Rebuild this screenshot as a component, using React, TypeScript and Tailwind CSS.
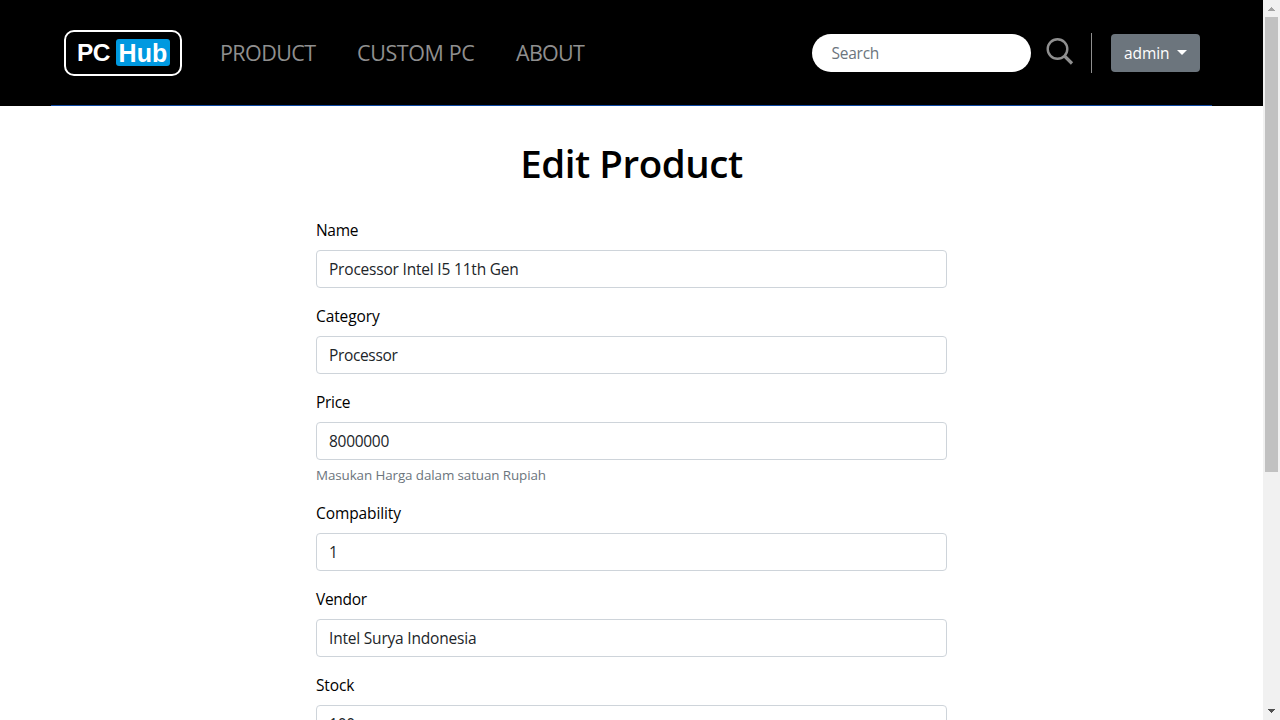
import React from "react";

type FieldProps = { label: string; labelClass: string; value: string; valueClass: string; hint?: string };

function Field({ label, labelClass, value, valueClass, hint }: FieldProps) {
  return (
    <div className="mb-4 flex flex-col">
      <label className="mb-2 h-6 leading-[25px] text-black">
        <span className={labelClass}>{label}</span>
      </label>
      <div className="h-[38px] rounded border border-[#ced4da] bg-white px-3 pt-[6px] leading-[25px] text-[#212529]">
        <span className={valueClass}>{value}</span>
      </div>
      {hint && (
        <div className="mt-1 h-[21px] text-[13.4px] leading-[22px] text-[#6c757d]">
          <span className="tracking-[-0.1px]">{hint}</span>
        </div>
      )}
    </div>
  );
}

function Logo() {
  return (
    <div className="flex h-[46px] w-[118px] items-center rounded-[10px] border-[2.5px] border-white pl-[11px] font-['Liberation_Sans'] text-[25px] font-bold leading-none text-white">
      <span className="w-[39px] pt-[2px] text-[24.5px] tracking-[-0.6px]">PC</span>
      <span className="flex h-[27px] w-[54px] items-center justify-center rounded-[3px] bg-[#0099e0] pt-[2px] tracking-[0.1px]">Hub</span>
    </div>
  );
}

function Scrollbar() {
  return (
    <div className="flex h-full w-[17px] flex-none flex-col items-center bg-[#f1f1f1]">
      <svg className="h-[17px] w-[17px]" viewBox="0 0 17 17" shapeRendering="crispEdges">
        <path d="M8 7h1v1h1v1h1v1h1v1H5v-1h1V9h1V8h1z" fill="#a3a3a3" />
      </svg>
      <div className="h-[455px] w-[13px] bg-[#c1c1c1]" />
      <div className="flex-1" />
      <svg className="h-[17px] w-[17px]" viewBox="0 0 17 17" shapeRendering="crispEdges">
        <path d="M5 6h7v1h-1v1h-1v1H9v1H8V9H7V8H6V7H5z" fill="#505050" />
      </svg>
    </div>
  );
}

export default function App() {
  return (
    <div className="flex h-[720px] w-[1280px] overflow-hidden bg-white font-['Open_Sans',sans-serif] text-[15.5px]">
      <div className="flex min-w-0 flex-1 flex-col">
        <header className="h-[106px] flex-none bg-black px-[51px]">
          <nav className="flex h-[106px] items-center border-b border-[#0d47a1] pl-[13px] pr-[12px]">
            <Logo />
            <div className="ml-[38px] flex text-[21.5px] leading-8 text-[#8f8f8f]">
              <a className="w-[137px] tracking-[-0.6px]">PRODUCT</a>
              <a className="w-[159px] tracking-[-0.4px]">CUSTOM PC</a>
              <a className="tracking-[-0.7px]">ABOUT</a>
            </div>
            <div className="ml-auto flex h-[38px] w-[219px] items-center rounded-full bg-white pl-[19.5px] pt-[2px] text-[#6c757d]">
              <span className="tracking-[-0.25px]">Search</span>
            </div>
            <svg className="mb-1 ml-[15px] h-[28px] w-[28px]" viewBox="0 0 28 28" fill="none" stroke="#8f8f8f">
              <circle cx="11.5" cy="12" r="9.8" strokeWidth="2.4" />
              <path d="M18.5 19L26 26.5" strokeWidth="3.2" />
            </svg>
            <div className="ml-[17px] h-10 w-px bg-[#8f8f8f]" />
            <button className="ml-[19px] flex h-[38px] w-[89px] items-center rounded bg-[#6c757d] pl-[13px] text-white">
              <span className="pt-[2px] tracking-[-0.1px]">admin</span>
              <svg className="mb-[1px] ml-2 h-[5px] w-[10px]" viewBox="0 0 10 5">
                <path d="M0 0h10L5 5z" fill="white" />
              </svg>
            </button>
          </nav>
        </header>
        <main className="flex flex-col items-center">
          <h1 className="mt-[33px] h-12 text-[38.5px] font-semibold leading-[48px] tracking-[-0.45px] text-black">Edit Product</h1>
          <form className="mt-[31px] w-[631px]">
            <Field label="Name" labelClass="tracking-[-0.3px]" value="Processor Intel I5 11th Gen" valueClass="tracking-[-0.2px]" />
            <Field label="Category" labelClass="tracking-[-0.1px]" value="Processor" valueClass="tracking-[-0.35px]" />
            <Field label="Price" labelClass="tracking-[-0.3px]" value="8000000" valueClass="tracking-[-0.3px]" hint="Masukan Harga dalam satuan Rupiah" />
            <Field label="Compability" labelClass="tracking-[-0.1px]" value="1" valueClass="tracking-[-0.2px]" />
            <Field label="Vendor" labelClass="tracking-[-0.3px]" value="Intel Surya Indonesia" valueClass="tracking-[-0.2px]" />
            <Field label="Stock" labelClass="tracking-[-0.15px]" value="100" valueClass="tracking-[-0.2px]" />
          </form>
        </main>
      </div>
      <Scrollbar />
    </div>
  );
}
